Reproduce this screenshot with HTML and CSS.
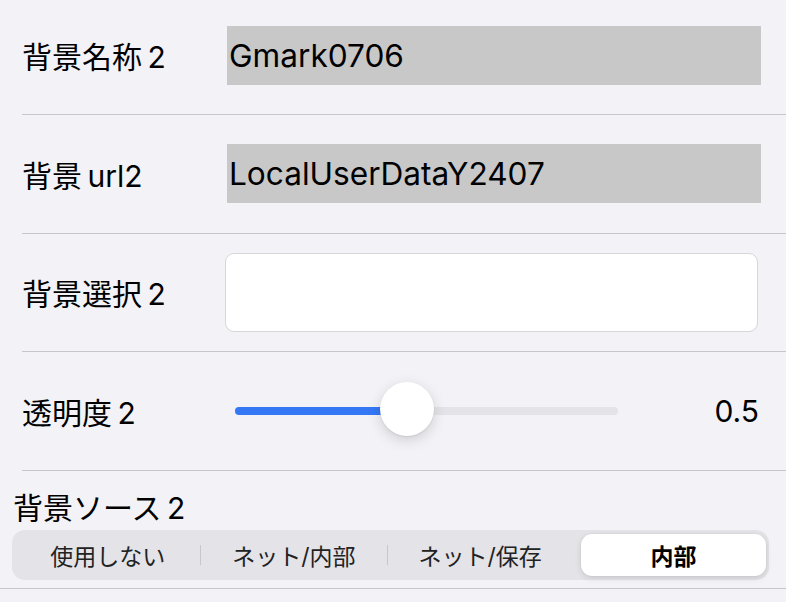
FILE: index.html
```html
<!DOCTYPE html>
<html lang="ja">
<head>
    <meta charset="UTF-8">
    <meta name="viewport" content="width=device-width, initial-scale=1.0">
    <title>背景設定</title>
    <link rel="stylesheet" href="styles.css">
</head>
<body>
    <div class="form-list">
        <!-- 背景名称 -->
        <div class="form-row">
            <span class="row-label">背景名称 2</span>
            <div class="field readonly">Gmark0706</div>
        </div>

        <!-- 背景url -->
        <div class="form-row">
            <span class="row-label">背景 url2</span>
            <div class="field readonly">LocalUserDataY2407</div>
        </div>

        <!-- 背景選択 -->
        <div class="form-row">
            <span class="row-label">背景選択 2</span>
            <div class="field input-box"></div>
        </div>

        <!-- 透明度 -->
        <div class="form-row">
            <span class="row-label">透明度 2</span>
            <div class="slider">
                <div class="slider-track">
                    <div class="slider-fill" style="width: 45%"></div>
                    <div class="slider-thumb" style="left: 45%"></div>
                </div>
            </div>
            <span class="slider-value">0.5</span>
        </div>

        <!-- 背景ソース -->
        <div class="form-row source-row">
            <span class="source-label">背景ソース 2</span>
            <div class="segmented">
                <div class="segment">使用しない</div>
                <div class="segment-divider"></div>
                <div class="segment">ネット/内部</div>
                <div class="segment-divider"></div>
                <div class="segment">ネット/保存</div>
                <div class="segment-divider hidden"></div>
                <div class="segment selected">内部</div>
            </div>
        </div>
    </div>
</body>
</html>
```

FILE: styles.css
```css
/* 全体 */
* {
    margin: 0;
    padding: 0;
    box-sizing: border-box;
}

body {
    font-family: 'Inter', 'Noto Sans CJK JP', sans-serif;
    background-color: #f2f2f7;
    color: #000;
    height: 100vh;
    overflow: hidden;
}

.form-list {
    margin-top: -3.5px;
}

/* 行 */
.form-row {
    display: flex;
    align-items: center;
    height: 118.5px;
    margin-left: 22px;
    padding-right: 25px;
    border-bottom: 1px solid #c8c7cc;
}

.row-label {
    width: 205px;
    flex-shrink: 0;
    font-size: 30px;
    word-spacing: -3px;
}

.field {
    flex: 1;
    height: 59px;
    display: flex;
    align-items: center;
    font-size: 31.6px;
    padding-left: 2px;
}

.readonly {
    background-color: #c8c8c8;
}

.input-box {
    height: 79px;
    margin-left: -2px;
    margin-right: 3px;
    background-color: #fff;
    border: 1px solid #d6d6da;
    border-radius: 9px;
}

/* スライダー */
.slider {
    width: 383px;
    margin-left: 8px;
    padding: 20px 0;
}

.slider-track {
    position: relative;
    height: 8px;
    background-color: #e3e3e8;
    border-radius: 4px;
}

.slider-fill {
    height: 100%;
    background-color: #3478f6;
    border-radius: 4px;
}

.slider-thumb {
    position: absolute;
    top: 50%;
    width: 54px;
    height: 54px;
    margin-left: -27px;
    margin-top: -29px;
    background-color: #fff;
    border-radius: 50%;
    box-shadow: 0 4px 14px rgba(0, 0, 0, 0.15), 0 1px 2px rgba(0, 0, 0, 0.08);
}

.slider-value {
    margin-left: auto;
    font-size: 30px;
    margin-right: 2px;
}

/* 背景ソース */
.source-row {
    flex-direction: column;
    align-items: stretch;
    justify-content: flex-start;
    margin-left: 0;
    padding: 17px 17px 0 12px;
}

.source-label {
    font-size: 30px;
    line-height: 40px;
    word-spacing: -3px;
    padding-left: 1px;
}

.segmented {
    display: flex;
    align-items: center;
    height: 50px;
    margin-top: 2px;
    padding: 4px 3px;
    background-color: #e3e3e8;
    border-radius: 13px;
}

.segment {
    flex: 1;
    height: 100%;
    display: flex;
    align-items: center;
    justify-content: center;
    font-size: 23px;
    color: #222;
}

.segment-divider {
    width: 1px;
    height: 20px;
    background-color: #c7c7cc;
}

.segment-divider.hidden {
    background-color: transparent;
}

.segment.selected {
    margin-left: 7px;
    background-color: #fff;
    border-radius: 11px;
    font-weight: 700;
    color: #000;
    box-shadow: 0 2px 6px rgba(0, 0, 0, 0.12), 0 0 0 0.5px rgba(0, 0, 0, 0.04);
}
```
